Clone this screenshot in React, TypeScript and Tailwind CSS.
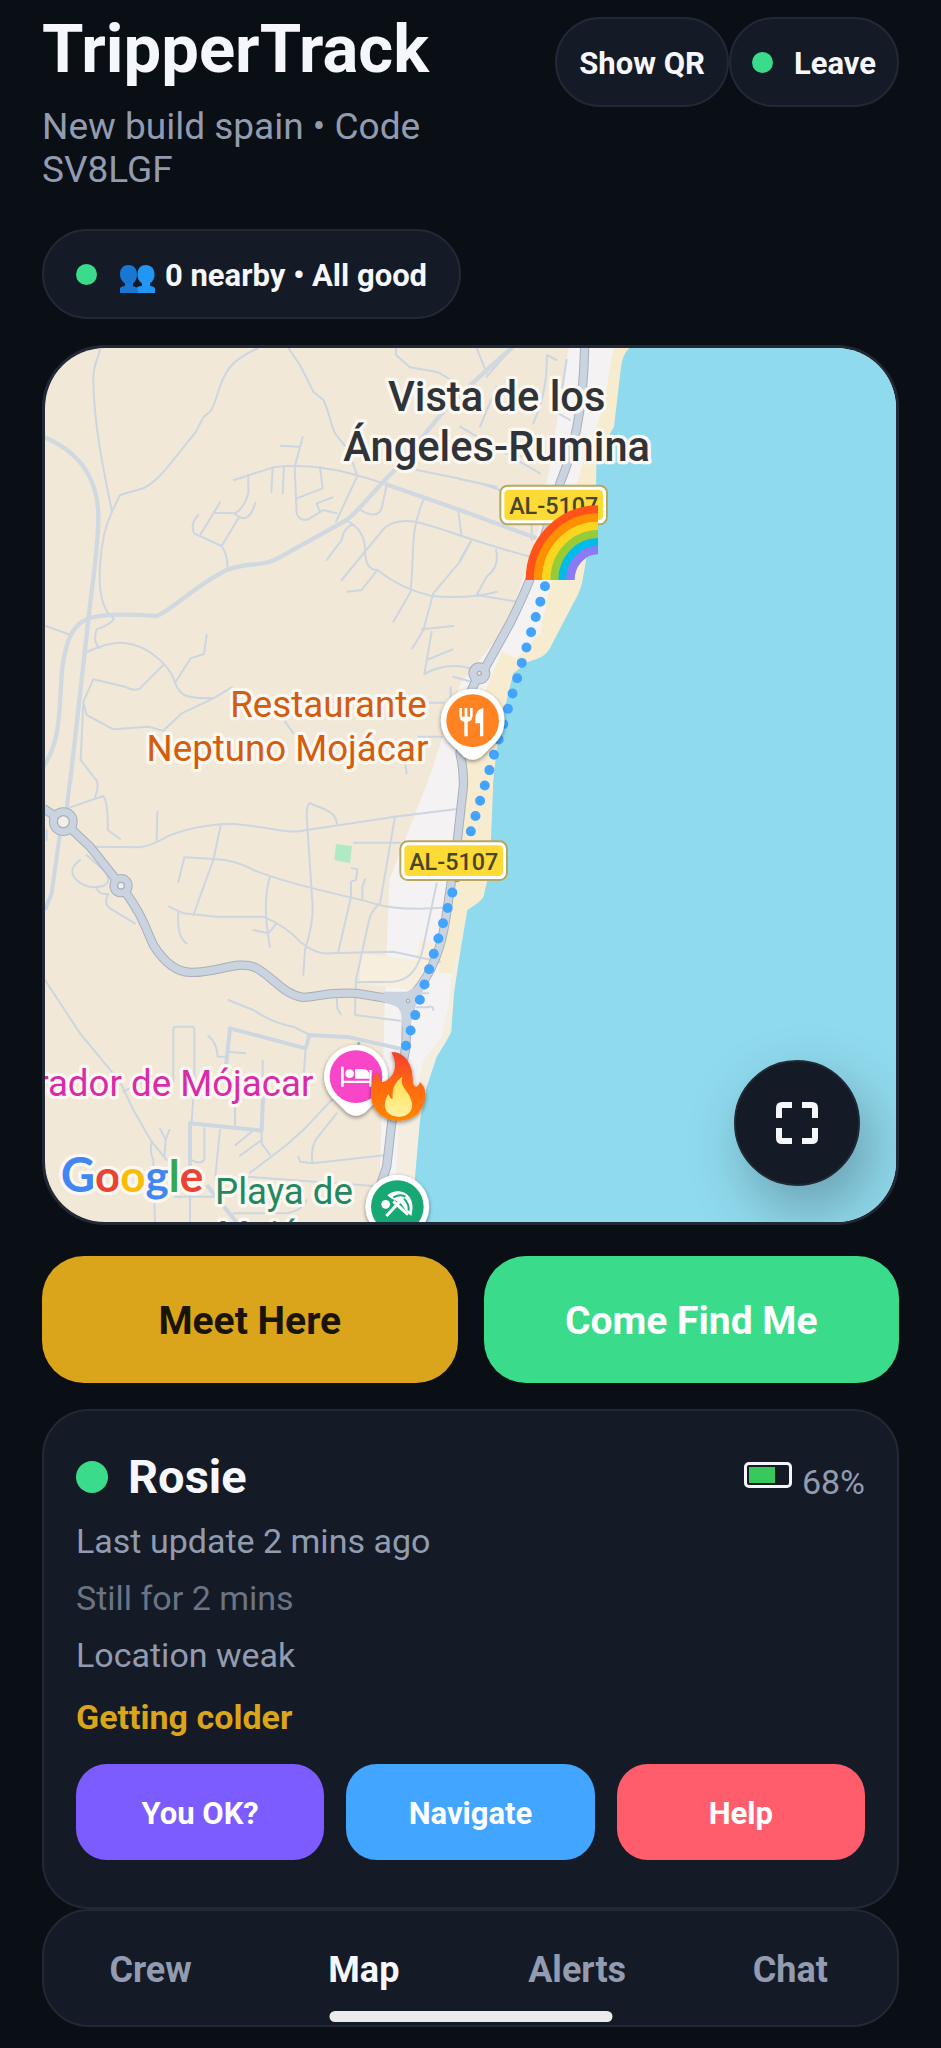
import React from 'react';
import clsx from 'clsx';

const tabs = [
  { name: 'Crew', active: false },
  { name: 'Map', active: true },
  { name: 'Alerts', active: false },
  { name: 'Chat', active: false },
];

const rainbow = [
  { r: 204, color: '#ff5319' },
  { r: 180, color: '#ff9000' },
  { r: 155, color: '#fbd61f' },
  { r: 130, color: '#98cc36' },
  { r: 106, color: '#00bce6' },
  { r: 83, color: '#8a7af5' },
];

const PeopleIcon = () => (
  <svg viewBox="0 0 36 36" className="size-9" aria-hidden="true">
    <path d="M9.500 7C14 7 18 10 18 16.500c0 4-1.500 7-4 9v2.500l5 2v5H1v-4c0-1.500 1-2.500 5-3v-2.500c-3-2-5-5-5-9C1 10 4.500 7 9.500 7z" fill="#1976d2" />
    <path d="M27 7c5 0 8.500 3.500 8.500 9.500 0 4-1.500 7-4.500 9V28c4 .5 5 1.500 5 3v4H19c0-3-1-4-1-5 .5-1.500 2-1.800 5-2v-2.500c-3-2-4.500-5-4.500-9C18.500 10 22 7 27 7z" fill="#2196f3" />
  </svg>
);

const MapPin = ({ x, y, color, children }: { x: number; y: number; color: string; children: React.ReactNode }) => (
  <g transform={`translate(${x} ${y})`}>
    <g filter="url(#pin-shadow)">
      <path d="M0-95A95 95 0 0 1 74 60L26 108Q0 126-26 108L-74 60A95 95 0 0 1 0-95z" fill="#fff" />
    </g>
    <circle r="79" fill={color} />
    {children}
  </g>
);

const RoadBadge = ({ x, y }: { x: number; y: number }) => (
  <g transform={`translate(${x} ${y})`}>
    <rect x="-160" y="-58" width="320" height="116" rx="22" fill="#fff" stroke="#b7a763" strokeWidth="6" />
    <rect x="-148" y="-46" width="296" height="92" rx="13" fill="#fdda35" />
    <text y="27" textAnchor="middle" fontSize="70" fontWeight="500" fill="#48452a">
      AL-5107
    </text>
  </g>
);

const MapDrawing = () => (
  <svg
    viewBox="15 24 2553 2622"
    preserveAspectRatio="xMidYMid slice"
    className="block w-full h-full font-['Roboto',sans-serif]"
    role="img"
    aria-label="Map of the coast near Mojácar"
  >
    <defs>
      <filter id="pin-shadow" x="-20%" y="-20%" width="140%" height="150%">
        <feDropShadow dx="0" dy="5" stdDeviation="6" floodColor="#000" floodOpacity="0.45" />
      </filter>
      <linearGradient id="flame" x1="0" y1="0" x2="0" y2="1">
        <stop offset="0" stopColor="#f5402f" />
        <stop offset="0.5" stopColor="#ff6a10" />
        <stop offset="1" stopColor="#ff8503" />
      </linearGradient>
      <linearGradient id="flame-core" x1="0" y1="0" x2="0" y2="1">
        <stop offset="0" stopColor="#ffe14d" />
        <stop offset="1" stopColor="#fff1a0" />
      </linearGradient>
    </defs>

    {/* land, built-up strip, beach and sea */}
    <rect width="2600" height="2700" fill="#f2e8d7" />
    <path d="M1590 0H1730L1705 180 1650 330 1580 600 1550 830 1400 1000 1360 1300 1290 1700 1250 1900 1220 2120 1140 2300 1100 2680H1015L1035 1960 1048 1620 1165 1320 1262 1030 1400 860 1500 560z" fill="#f4f2f3" />
    <path d="M1725 0H1775L1745 80 1722 260 1670 350 1668 430 1640 660 1628 720 1600 790 1525 930 1465 965 1420 1000 1370 1230 1360 1320 1353 1500 1342 1620 1330 1672 1282 1710 1260 1840 1235 1900H1195L1215 1750 1245 1600 1270 1320 1290 1160 1385 935 1430 955 1500 880 1550 650 1625 380 1690 200z" fill="#f8ecd0" />
    <path d="M1140 1800L1200 1810 1180 1890 1120 1950 960 1930 960 1840 1130 1860z" fill="#f7eedd" />
    <path d="M1240 1860L1225 2000 1205 2090 1150 2160 1110 2340 1075 2350 1060 2680H1125L1150 2260 1190 2150 1228 2085 1260 1840z" fill="#f4eee0" />
    <path d="M1768 0L1768 24Q1745 45 1742 90L1722 260 1670 350 1668 430 1645 620 1628 720Q1622 755 1600 790L1530 925Q1515 955 1465 965L1420 1000 1395 1100 1370 1230 1360 1320 1353 1500 1342 1620 1330 1672Q1322 1686 1282 1710L1260 1840 1242 1960 1234 2075Q1222 2100 1190 2150L1160 2240 1140 2340 1125 2510 1122 2700H2600V0z" fill="#90daee" />

    {/* north side streets */}
    <g fill="none" stroke="#ccd6e0" strokeWidth="6" strokeLinecap="round" strokeLinejoin="round">
      <path d="M182 20C175 60 158 70 160 125C162 250 190 390 216 515" />
      <path d="M655 24C610 45 575 65 555 105C530 150 530 190 510 215L490 232 468 275 400 360C360 410 340 430 310 445L240 465 216 515C180 590 160 760 205 820L222 836Q215 852 170 868Q158 905 178 924" />
      <path d="M745 24L780 75 820 155 850 180C870 220 870 250 885 280L925 330 952 408 888 545" />
      <path d="M1068 24V45L1110 82 1195 97 1250 130" />
      <path d="M582 420L700 382C800 370 900 385 1030 430" />
      <path d="M722 317L775 320M788 292L764 380 770 520Q780 545 805 538L850 510 890 520M698 382L694 456M732 378L728 460M840 382L848 445 770 475M878 472L830 490 838 512M625 405V460Q610 510 583 520L525 518M540 487L482 583M583 520Q625 560 646 488M595 535L545 618M475 525Q450 550 462 580L545 618Q565 650 562 690" />
      <path d="M1040 435L1025 505Q1010 540 962 510M1150 480C1110 580 1125 600 1112 755M920 542Q975 570 975 630T1012 690Q1080 745 1175 768 1290 778 1370 755M935 555Q910 565 905 600L860 660M905 720L1020 580Q1050 535 1125 545C1200 560 1280 600 1470 650M1012 690L965 750 922 755M1112 755L1060 845M1255 515L1265 590M1292 605L1260 665 1180 760 1150 870 1117 925M1145 868L1240 858M1175 875L1153 1002Q1220 965 1290 985M1160 960L1238 928M1240 1010L1310 1030" />
      <path d="M15 857L92 885M140 936C220 900 260 900 320 930Q390 975 405 1028C420 1070 440 1075 520 1075L575 1042M405 1028L452 955 492 942 500 885M370 975L300 1045Q280 1055 255 1040L160 1018 130 1085 140 1125 220 1168 325 1160 370 1172 425 1120 520 1075M130 1085L122 1260 168 1320M735 1145L760 1180M1095 1270L1100 1300M1232 1042V1095M1165 1088H1210M1135 1190H1205" />
      <path d="M1310 24L1340 100M1415 24L1340 110M1550 60L1520 45Q1525 150 1480 250M1580 60L1555 220 1590 240M1260 260L1500 400M1130 390Q1280 420 1320 430L1440 470M1260 418L1370 440M1260 300L1450 350M1370 140L1320 260M1475 440V600M1368 630Q1380 680 1340 710L1310 765 1430 785M1292 605L1260 660" />
    </g>
    <g fill="none" stroke="#d0d9e0" strokeWidth="13" strokeLinejoin="round">
      <path d="M10 290C130 340 175 430 175 530S155 740 145 840L90 1330" />
      <path d="M10 1280C80 1180 50 1020 75 940Q90 860 140 838T350 828C390 815 460 740 560 690C640 660 660 690 740 640L920 540C960 510 1010 440 1070 385L1210 215C1270 150 1340 90 1420 20" />
      <path d="M1035 432L1260 510 1490 595" />
    </g>

    {/* south side streets */}
    <g transform="translate(0 1320)" fill="none" stroke="#ccd6e0" strokeWidth="6" strokeLinecap="round" strokeLinejoin="round">
      <path d="M90 82L190 48Q205 70 203 150L240 177M170 0Q178 25 165 50M352 95L350 180M155 200L300 202Q340 195 385 168C440 145 520 130 580 132C700 140 740 165 800 150L1065 110 1245 88" />
      <path d="M543 132L520 240 460 405M415 305L433 232 520 237Q590 240 640 270C780 325 920 345 1000 370Q1080 395 1230 382M387 380L430 400 530 410H670Q740 440 780 485 830 525 870 520L1060 515 1200 545M415 400Q410 470 440 490M690 290Q665 370 690 500M640 450L685 460 710 430" />
      <path d="M890 130Q890 95 820 75 800 55 800 110L818 380Q820 430 795 510L790 585M942 188H1080M935 265L952 268 948 300 933 305V350L895 515M975 298L967 320V355M1065 110L1020 370Q990 395 985 430L948 600 945 705 1080 722M1190 310L1150 500Q1130 600 1060 605L950 607" />
      <path d="M120 240Q80 270 110 300T190 318Q220 300 190 270L140 225M170 325Q180 345 205 342 190 370 210 385L285 430M15 600L120 760 240 905 280 990 335 1085 380 1140M565 660L640 690Q700 730 760 740L810 765M400 905V745Q400 740 410 740H455Q463 740 463 750V910L455 1025M505 768Q530 785 533 830H555M560 815L617 820M797 805L790 900M668 842V930M585 980V1040M1000 855L870 965 800 1040 740 1095 630 1178M890 1000L830 1075Q810 1110 818 1150L1040 1125M818 1150L780 1145 775 1130" />
      <path d="M635 1055L587 1095M665 1080L600 1127M665 1055V1090L690 1125M540 1050L525 1200M493 1045V1140Q480 1155 455 1140M335 1085Q328 1120 340 1140L345 1330M360 1045L377 1080 388 1050M377 1080L373 1130M450 1240V1330M405 1250H560M620 1190L1000 1218M890 650L892 685 902 703M1140 640H1165M1130 682H1165Q1180 675 1180 690M580 1300H740Q790 1290 800 1260" />
      <path d="M250 935L340 890M20 150V180" />
    </g>
    <g transform="translate(0 1320)" fill="none" stroke="#ccd7e1" strokeWidth="12" strokeLinejoin="round">
      <path d="M553 905L570 745 797 805 808 765 930 772 1090 808" />
      <path d="M450 1170V1030L665 1052 670 930M500 1215L600 1340M90 0L80 90M60 160L35 340 15 390" />
    </g>
    <path d="M888 1512L936 1518 930 1570 883 1560z" fill="#afeac5" />
    <circle cx="956" cy="2110" r="5" fill="#8dc8a2" />

    {/* main roads: dark casing first, then the surface */}
    <g fill="none" strokeLinejoin="round">
      <g stroke="#a9afb9" strokeWidth="28">
        <path d="M1634 20C1630 220 1600 330 1560 430L1510 600Q1480 710 1410 850L1335 985 1318 1000 1290 1060 1260 1240Q1272 1290 1270 1340L1250 1520 1215 1750Q1190 1900 1100 1985L1098 2120 1055 2350 1040 2480 1020 2540" />
        <path d="M10 1405L70 1445 150 1520 243 1637C310 1730 310 1750 340 1815Q390 1895 450 1897C530 1900 590 1860 645 1882C700 1910 730 1965 790 1972C850 1970 850 1955 950 1960L1100 1985" />
      </g>
      <g fill="#a9afb9">
        <circle cx="1318" cy="1000" r="33" />
        <circle cx="70" cy="1445" r="43" />
        <circle cx="243" cy="1637" r="35" />
      </g>
      <g stroke="#c9d4e0" strokeWidth="22">
        <path d="M1634 20C1630 220 1600 330 1560 430L1510 600Q1480 710 1410 850L1335 985 1318 1000 1290 1060 1260 1240Q1272 1290 1270 1340L1250 1520 1215 1750Q1190 1900 1100 1985L1098 2120 1055 2350 1040 2480 1020 2540" />
        <path d="M10 1405L70 1445 150 1520 243 1637C310 1730 310 1750 340 1815Q390 1895 450 1897C530 1900 590 1860 645 1882C700 1910 730 1965 790 1972C850 1970 850 1955 950 1960L1100 1985" />
      </g>
      <g fill="#c9d4e0">
        <circle cx="1318" cy="1000" r="30" />
        <circle cx="70" cy="1445" r="40" />
        <circle cx="243" cy="1637" r="32" />
        <path d="M1030 1955L1100 1955 1165 1920 1130 1990 1110 2060H1086Q1090 2015 1070 2000L1030 1985z" />
      </g>
      <g fill="#f2eee8" stroke="#a9afb9" strokeWidth="4">
        <circle cx="1318" cy="1000" r="6" />
        <circle cx="70" cy="1445" r="18" />
        <circle cx="243" cy="1637" r="10" />
        <circle cx="1104" cy="1983" r="5" />
      </g>
    </g>

    <line x1="1515" y1="739" x2="1097" y2="2120" stroke="#42a4ff" strokeWidth="30" strokeLinecap="round" strokeDasharray="0 48" />

    {/* place names */}
    <g stroke="#fbf7f1" strokeWidth="20" strokeLinejoin="round" style={{ paintOrder: 'stroke' }}>
      <g fontSize="125" fontWeight="500" fill="#303338" textAnchor="middle">
        <text x="1370" y="214">Vista de los</text>
        <text x="1370" y="364">Ángeles-Rumina</text>
      </g>
      <g fontSize="110" textAnchor="end">
        <text x="1160" y="1132" fill="#d35c0e">Restaurante</text>
        <text x="1165" y="1263" fill="#d35c0e">Neptuno Mojácar</text>
        <text x="820" y="2267" fill="#d92ba9">Parador de Mójacar</text>
      </g>
      <g fontSize="110" fill="#23875f" textAnchor="middle">
        <text x="732" y="2592">Playa de</text>
        <text x="732" y="2722">Mojácar</text>
      </g>
      <text x="62" y="2555" fontSize="132" fontWeight="700" className="font-['Lato',sans-serif]">
        <tspan fill="#4285f4" fontSize="142">G</tspan>
        <tspan fill="#ea4335">o</tspan>
        <tspan fill="#fbbc05">o</tspan>
        <tspan fill="#4285f4">g</tspan>
        <tspan fill="#34a853">l</tspan>
        <tspan fill="#ea4335">e</tspan>
      </text>
    </g>

    <RoadBadge x={1541} y={495} />
    <RoadBadge x={1241} y={1562} />

    <MapPin x={1298} y={1142} color="#ff8223">
      <path d="M-40-38V-18Q-40 0-25 4V47H-15V4Q0 0 0-18V-38H-8V-12H-16V-38H-24V-12H-32V-38zM32-38Q8-34 8-5V8H22V47H32z" fill="#fff" />
    </MapPin>
    <MapPin x={948} y={2210} color="#f946c8">
      <path d="M-45-30H-37V12H40V-20H47V30H40V19H-37V30H-45z" fill="#fff" />
      <circle cx="-19" cy="-9" r="13" fill="#fff" />
      <path d="M-3-22H20Q40-22 40-5V6H-3z" fill="#fff" />
    </MapPin>
    <MapPin x={1072} y={2600} color="#18a873">
      <circle cx="-35" cy="-7" r="13" fill="#fff" />
      <path d="M-33 28L12-20M-12-16L32 24" stroke="#fff" strokeWidth="9" />
      <path d="M-30-34C0-62 62-42 42 28L32 20 10-10-20-26z" fill="#fff" />
      <path d="M-12-28Q10-40 24-30M20-24Q36-8 34 12" fill="none" stroke="#18a873" strokeWidth="6" />
    </MapPin>

    {/* crew members */}
    <g transform="translate(1674 720)" fill="none" strokeWidth="26">
      {rainbow.map((band) => (
        <path key={band.color} d={`M${-band.r} 0A${band.r} ${band.r + 7} 0 0 1 0 ${-band.r - 7}`} stroke={band.color} />
      ))}
    </g>
    <g transform="translate(0 1320)">
      <path
        d="M1054 817C1085 812 1118 845 1118 895C1118 915 1124 922 1130 920C1137 918 1137 912 1140 907C1150 915 1158 930 1156 950C1152 995 1118 1022 1075 1022C1030 1022 993 990 993 945C993 905 1003 885 1013 872C1016 890 1020 905 1030 906C1060 895 1078 860 1054 817z"
        fill="url(#flame)"
        filter="url(#pin-shadow)"
      />
      <path
        d="M1087 890C1080 915 1095 925 1107 945C1117 965 1120 980 1112 992C1105 1005 1090 1010 1075 1010C1050 1010 1032 995 1035 970C1037 955 1042 945 1046 942C1048 952 1052 957 1058 956C1056 925 1065 905 1087 890z"
        fill="url(#flame-core)"
      />
    </g>
  </svg>
);

const App = () => {
  return (
    <div className="relative min-h-screen bg-[#0a0f16] px-[42px] pt-[17px] pb-[21px] font-['Roboto',sans-serif] text-[#f5f7fc]">
      <header className="flex items-start justify-between">
        <div className="flex-1">
          <h1 className="text-[67px] leading-[64px] font-bold">TripperTrack</h1>
          <p className="mt-6 max-w-[420px] text-[37px] leading-[43px] text-[#929bb0]">New build spain • Code SV8LGF</p>
        </div>
        <div className="flex shrink-0">
          <button className="h-[90px] rounded-[46px] border-2 border-[#222936] bg-[#151b26] px-[22px] pt-1 text-[31px] font-bold">
            Show QR
          </button>
          <button className="flex h-[90px] items-center gap-[21px] rounded-[46px] border-2 border-[#222936] bg-[#151b26] px-[21px] text-[31px] font-bold">
            <span className="size-[21px] rounded-full bg-[#3adb8a]" />
            <span className="pt-1">Leave</span>
          </button>
        </div>
      </header>

      <div className="mt-[38px] inline-flex h-[90px] items-center gap-[22px] rounded-[46px] border-2 border-[#222936] bg-[#151b26] px-8 align-top">
        <span className="size-[21px] rounded-full bg-[#3adb8a]" />
        <span className="flex items-center gap-[10px] pt-1 text-[31px] font-bold">
          <PeopleIcon />
          0 nearby • All good
        </span>
      </div>

      <main>
        <div className="relative mt-[26px] h-[880px] overflow-hidden rounded-[63px] border-3 border-[#222936]">
          <MapDrawing />
          <button
            aria-label="Full screen"
            className="absolute right-9 bottom-9 flex size-[126px] items-center justify-center rounded-full border-2 border-[#222936] bg-[#151b26] shadow-[12px_24px_60px_rgba(0,0,0,0.28)]"
          >
            <svg viewBox="0 0 42 42" className="size-[42px]" fill="none" stroke="#f5f7fc" strokeWidth="6">
              <path d="M3 16V6Q3 3 6 3H16M26 3H36Q39 3 39 6V16M39 26V36Q39 39 36 39H26M16 39H6Q3 39 3 36V26" />
            </svg>
          </button>
        </div>

        <div className="mt-[31px] grid grid-cols-2 gap-[26px]">
          <button className="h-[127px] rounded-[42px] bg-[#daa51b] pt-1 text-[39px] font-bold text-[#1a1404]">Meet Here</button>
          <button className="h-[127px] rounded-[42px] bg-[#3adb8a] pt-1 text-[39px] font-bold text-white">Come Find Me</button>
        </div>

        <section className="mt-[26px] rounded-[47px] border-2 border-[#222936] bg-[#151b26] px-8 pt-[38px] pb-[47px]">
          <div className="flex items-center">
            <span className="size-8 rounded-full bg-[#3adb8a]" />
            <h2 className="ml-5 text-[47px] leading-[55px] font-bold">Rosie</h2>
            <div className="ml-auto flex items-start gap-[10px] self-end pb-[2px]">
              <div className="h-[26px] w-[48px] rounded-[5px] border-3 border-[#f5f7fc] p-[2px]">
                <div className="h-full bg-[#37c95c]" style={{ width: '68%' }} />
              </div>
              <span className="text-[34px] leading-10 text-[#929bb0]">68%</span>
            </div>
          </div>
          <div className="mt-[17px] flex flex-col gap-[17px] text-[34px] leading-10 text-[#929bb0]">
            <p>Last update 2 mins ago</p>
            <p className="text-[#6b7484]">Still for 2 mins</p>
            <p>Location weak</p>
          </div>
          <p className="mt-[22px] text-[34px] leading-10 font-bold text-[#daa51b]">Getting colder</p>
          <div className="mt-[27px] grid grid-cols-3 gap-[22px] text-[31px] font-bold text-white">
            <button className="h-[96px] rounded-[31px] bg-[#7c5cff] pt-1">You OK?</button>
            <button className="h-[96px] rounded-[31px] bg-[#42a5ff] pt-1">Navigate</button>
            <button className="h-[96px] rounded-[31px] bg-[#ff5d6c] pt-1">Help</button>
          </div>
        </section>
      </main>

      <nav className="grid h-[118px] grid-cols-4 rounded-[47px] border-2 border-[#222936] bg-[#151b26] pt-1 text-[36px] font-bold">
        {tabs.map((tab) => (
          <a
            key={tab.name}
            href="#"
            className={clsx('flex items-center justify-center', tab.active ? 'text-[#f5f7fc]' : 'text-[#929bb0]')}
          >
            {tab.name}
          </a>
        ))}
      </nav>
      <div className="absolute bottom-[26px] left-1/2 h-[11px] w-[283px] -translate-x-1/2 rounded-full bg-[#ebebeb]" />
    </div>
  );
};

export default App;
